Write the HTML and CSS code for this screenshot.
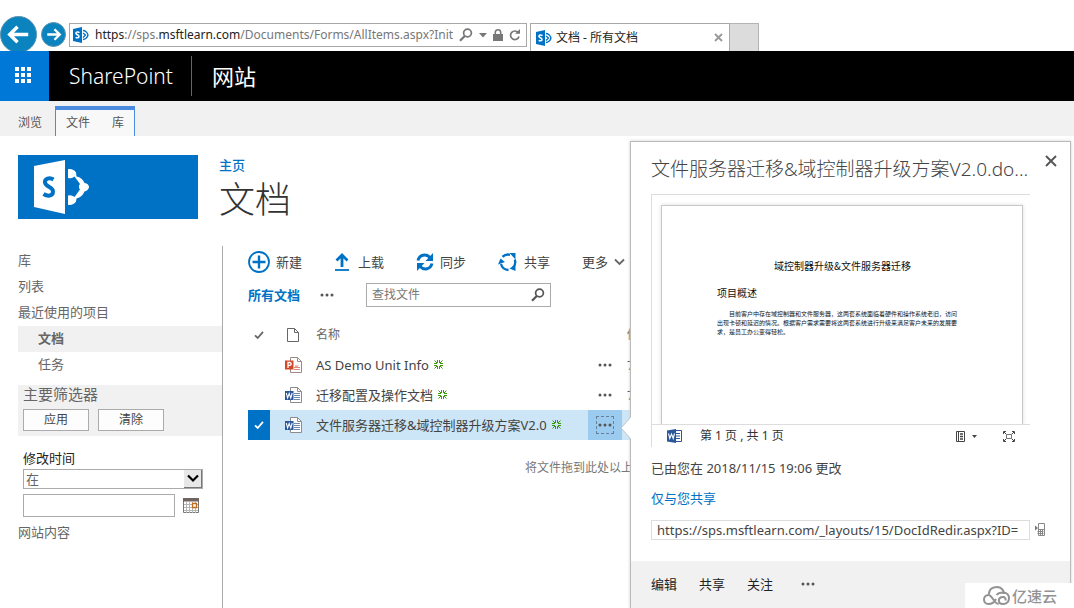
FILE: index.html
```html
<!DOCTYPE html>
<html lang="zh-CN">
<head>
<meta charset="utf-8">
<title>文档 - 所有文档</title>
<link rel="stylesheet" href="styles.css">
</head>
<body>
<svg class="sprite" aria-hidden="true">
  <symbol id="sp" viewBox="0 0 16 16">
    <path d="M0 2 9 0v16L0 14z" fill="#0072c6"/>
    <path d="M6.500 5.600C5 4.600 2.800 4.800 2.900 6.400 3 8 6 7.600 6 9.500 6 11.200 3.800 11.100 2.700 10.300" fill="none" stroke="#fff" stroke-width="1.500"/>
    <path d="M10 3.500c2 0 4.500 2 5 4.500-.5 2.500-3 4.500-5 4.500M10 6l2.500 2L10 10.500" fill="none" stroke="#0072c6" stroke-width="1.300"/>
  </symbol>
  <symbol id="search" viewBox="0 0 14 14">
    <circle cx="8.500" cy="5" r="3.900" fill="none" stroke="currentColor" stroke-width="1.700"/>
    <path d="M5.800 8 1 12.800" stroke="currentColor" stroke-width="2.200"/>
  </symbol>
  <symbol id="dots" viewBox="0 0 14 4">
    <circle cx="2" cy="2" r="1.500"/><circle cx="7" cy="2" r="1.500"/><circle cx="12" cy="2" r="1.500"/>
  </symbol>
  <symbol id="check" viewBox="0 0 10 10">
    <path d="M1 5.300 3.700 8 9 1.800" fill="none" stroke="currentColor" stroke-width="1.800"/>
  </symbol>
  <symbol id="spark" viewBox="0 0 9 9">
    <path d="M.5.500 3 3M8.500.5 6 3M.5 8.500 3 6M8.500 8.500 6 6M3.500 0v3M5.500 0v3M3.500 6v3M5.500 6v3M0 3.500h3M0 5.500h3M6 3.500h3M6 5.500h3" fill="none" stroke="#3c960c" stroke-width="1"/>
  </symbol>
  <symbol id="word" viewBox="0 0 17 16">
    <path d="M5.500.5h7l4 4v11h-11z" fill="#fff" stroke="#8c8c8c"/>
    <path d="M12.500.5v4h4" fill="none" stroke="#8c8c8c"/>
    <path d="M9 6.500h6M9 8.500h6M9 10.500h6M9 12.500h6" stroke="#7186ad"/>
    <path d="M0 4h8.500v9H0z" fill="#2b579a"/>
    <path d="m1.300 6 1.300 5L4.200 6.500 5.800 11 7.200 6" fill="none" stroke="#fff" stroke-width="1.100"/>
  </symbol>
  <symbol id="ppt" viewBox="0 0 17 16">
    <path d="M5.500.5h7l4 4v11h-11z" fill="#fff" stroke="#9a8c88"/>
    <path d="M12.500.5v4h4" fill="none" stroke="#9a8c88"/>
    <path d="M9 10.500h6M9 12.500h6" stroke="#d98a78"/>
    <path d="M10 4.500v4h4a4 4 0 0 1-4 1z" fill="#d98a78"/>
    <path d="M0 3.500h8.500v9H0z" fill="#d24726"/>
    <path d="M3 11V5.500h1.700c2 0 2 2.900 0 2.900H3" fill="none" stroke="#fff" stroke-width="1.300"/>
  </symbol>
</svg>

<header class="browser">
  <div class="nav">
    <button class="nav-btn back" aria-label="后退"><svg viewBox="0 0 36 36"><path d="M28 18H10M17 10l-8 8 8 8" fill="none" stroke="#fff" stroke-width="3.600"/></svg></button>
    <button class="nav-btn forward" aria-label="前进"><svg viewBox="0 0 24 24"><path d="M5.500 12H18M13 6.500l5.500 5.500-5.500 5.500" fill="none" stroke="#fff" stroke-width="2.500"/></svg></button>
  </div>
  <div class="address">
    <svg class="i16"><use href="#sp"/></svg>
    <div class="url"><b>https</b>://sps.<b>msftlearn.com</b>/Documents/Forms/AllItems.aspx?Init</div>
    <button class="plain" aria-label="搜索"><svg class="i14"><use href="#search"/></svg></button>
    <button class="plain" aria-label="展开"><svg width="8" height="5" viewBox="0 0 8 5"><path d="M0 0h8L4 4.500z" fill="#777"/></svg></button>
    <svg class="lock" width="10" height="12" viewBox="0 0 10 12"><path d="M0 5h10v7H0z" fill="#777"/><path d="M2.300 6V3.500a2.700 2.700 0 0 1 5.400 0V6" fill="none" stroke="#777" stroke-width="1.600"/></svg>
    <button class="plain" aria-label="刷新"><svg width="12" height="12" viewBox="0 0 12 12"><path d="M9.500 4A4.300 4.300 0 1 0 10 7.500" fill="none" stroke="#777" stroke-width="1.700"/><path d="M6 4.700h5V0z" fill="#777"/></svg></button>
  </div>
  <div class="tab">
    <svg class="i16"><use href="#sp"/></svg>
    <span>文档 - 所有文档</span>
    <button class="plain" aria-label="关闭标签页"><svg width="9" height="9" viewBox="0 0 9 9"><path d="m1 1 7 7M8 1 1 8" stroke="#999" stroke-width="1.800"/></svg></button>
  </div>
  <button class="new-tab" aria-label="新建标签页"></button>
</header>

<div class="suite">
  <button class="waffle" aria-label="应用启动器"><svg width="16" height="16" viewBox="0 0 16 16"><path d="M0 0h4v4H0zM6 0h4v4H6zM12 0h4v4h-4zM0 6h4v4H0zM6 6h4v4H6zM12 6h4v4h-4zM0 12h4v4H0zM6 12h4v4H6zM12 12h4v4h-4z" fill="#fff"/></svg></button>
  <a class="brand" href="#">SharePoint</a>
  <a class="sites" href="#">网站</a>
</div>

<nav class="ribbon">
  <a href="#">浏览</a>
  <div class="ribbon-group"><a href="#">文件</a><a href="#">库</a></div>
</nav>

<div class="page">
  <div class="heading">
    <a class="logo" href="#" aria-label="SharePoint">
      <svg width="56" height="54" viewBox="0 0 56 54">
        <path d="M0 6 31 0v54L0 47z" fill="#fff"/>
        <path d="M19.500 19.500C15.500 17 10.500 18.500 11 22.500c.5 4.500 8 4 8 9 0 5-5.500 5-9.500 2.500" fill="none" stroke="#0072c6" stroke-width="4"/>
        <path d="M37 14 50 27 37 40" fill="none" stroke="#fff" stroke-width="3"/>
        <path d="M34 9.200c3-.8 6.500.5 8 3.300l.5 4c4 .8 6.500 3 8 6.500 6 1 6 7 0 8.500-1.500 3.500-4 6-8 7l-.5 3c-1.500 2.500-5 4-8 3.200v-9.200c4-.5 6-3 6.500-6h4.500V24H40c-.5-3-3-5-6-6z" fill="#fff"/>
        <path d="M34 18.500c3.500 0 5-1 6.500-2l5.500 7.500c-1.500 1.500-1.500 4 0 5.500l-5.500 7.500c-1.500-1-3-2-6.500-2z" fill="#0072c6"/>
      </svg>
    </a>
    <div class="titles">
      <a class="crumb" href="#">主页</a>
      <h1>文档</h1>
    </div>
  </div>

  <div class="columns">
    <aside class="side">
      <nav>
        <a href="#">库</a>
        <a href="#">列表</a>
        <a href="#">最近使用的项目</a>
        <a class="sub current" href="#">文档</a>
        <a class="sub" href="#">任务</a>
      </nav>
      <section class="filter">
        <h2>主要筛选器</h2>
        <div class="filter-actions"><button>应用</button><button>清除</button></div>
      </section>
      <div class="field">
        <label for="op">修改时间</label>
        <div class="select"><select id="op"><option>在</option></select><svg width="18" height="18" viewBox="0 0 18 18"><path d="M0 0h18v18H0z" fill="#777"/><path d="M0 0h17v17H0z" fill="#e8e8e8"/><path d="m4 5.500 5 5 5-5" fill="none" stroke="#000" stroke-width="2.200"/></svg></div>
        <div class="date">
          <input type="text" aria-label="日期">
          <button class="plain" aria-label="选择日期"><svg width="16" height="16" viewBox="0 0 16 16"><path d="M.5.5h15v14H.5z" fill="#fff" stroke="#777"/><path d="M0 0h16v3.500H0z" fill="#6f6460"/><path d="M3.500 4v11M6.500 4v11M9.500 4v11M12.500 4v11M1 6.500h14M1 9.500h14M1 12.500h14" stroke="#b5b5b5"/><path d="M9.500 5.500h4v4h-4z" fill="#fff" stroke="#c66a1c" stroke-width="1.300"/></svg></button>
        </div>
      </div>
      <nav><a href="#">网站内容</a></nav>
    </aside>

    <main class="main">
      <div class="toolbar">
        <button><svg width="22" height="22" viewBox="0 0 22 22"><circle cx="11" cy="11" r="10" fill="none" stroke="#0072c6" stroke-width="1.800"/><path d="M11 4.500v13M4.500 11h13" stroke="#0072c6" stroke-width="2.400"/></svg>新建</button>
        <button><svg width="18" height="18" viewBox="-1 0 18 18"><path d="M7 14V2M1.500 7.500 7 2l5.500 5.500" fill="none" stroke="#0072c6" stroke-width="2.800"/><path d="M0 17h14" stroke="#0072c6" stroke-width="1.800"/></svg>上载</button>
        <button><svg width="18" height="18" viewBox="0 0 18 18"><path d="M2 7.500C3.500 1.500 10 .5 14 4.500M16 10.500c-1.500 6-8 7-12 3" fill="none" stroke="#0072c6" stroke-width="3"/><path d="M17 0v8H9.500zM1 18v-8h7.500z" fill="#0072c6"/></svg>同步</button>
        <button><svg width="20" height="19" viewBox="0 0 20 19"><path d="M4.500 3.800A8 8 0 0 1 12 1.800M16.800 6.500a8 8 0 0 1-1.800 8M10.500 17A8 8 0 0 1 3 11" fill="none" stroke="#0072c6" stroke-width="2.300"/><path d="M11.500 0h6v6.500zM17.500 11.500V18l-6-2.500zM0 11.500 2.500 5.500 7 9z" fill="#0072c6"/></svg>共享</button>
        <button>更多<svg width="11" height="8" viewBox="0 0 11 8"><path d="m1 1.500 4.500 4.500L10 1.500" fill="none" stroke="#666" stroke-width="1.800"/></svg></button>
      </div>
      <div class="views">
        <a href="#">所有文档</a>
        <button class="plain" aria-label="更多视图"><svg class="dots"><use href="#dots"/></svg></button>
        <div class="search"><input type="text" aria-label="查找文件" placeholder="查找文件"><button class="plain" aria-label="搜索"><svg class="i14"><use href="#search"/></svg></button></div>
      </div>
      <table class="files">
        <thead>
          <tr><th class="c-check"><svg class="i10"><use href="#check"/></svg></th><th class="c-icon"><svg width="12" height="14" viewBox="0 0 12 14"><path d="M.5.500h7l4 4v9H.5zM7.500.5v4h4" fill="none" stroke="#666"/></svg></th><th class="c-name">名称</th><th class="c-menu"></th><th class="c-date">修改时间</th></tr>
        </thead>
        <tbody>
          <tr><td></td><td class="c-icon"><svg class="doc"><use href="#ppt"/></svg></td><td class="c-name"><a href="#">AS Demo Unit Info</a><svg class="spark"><use href="#spark"/></svg></td><td class="c-menu"><button class="plain" aria-label="菜单"><svg class="dots"><use href="#dots"/></svg></button></td><td class="c-date">7 天前</td></tr>
          <tr><td></td><td class="c-icon"><svg class="doc"><use href="#word"/></svg></td><td class="c-name"><a href="#">迁移配置及操作文档</a><svg class="spark"><use href="#spark"/></svg></td><td class="c-menu"><button class="plain" aria-label="菜单"><svg class="dots"><use href="#dots"/></svg></button></td><td class="c-date">7 天前</td></tr>
          <tr class="selected"><td class="c-check"><svg class="i10"><use href="#check"/></svg></td><td class="c-icon"><svg class="doc"><use href="#word"/></svg></td><td class="c-name"><a href="#">文件服务器迁移&amp;域控制器升级方案V2.0</a><svg class="spark"><use href="#spark"/></svg></td><td class="c-menu"><button class="plain" aria-label="菜单"><svg class="dots"><use href="#dots"/></svg></button></td><td class="c-date"></td></tr>
        </tbody>
      </table>
      <p class="drop">将文件拖到此处以上载</p>
    </main>
  </div>
</div>

<div class="callout" role="dialog" aria-label="文件预览">
  <svg class="beak" width="11" height="22" viewBox="0 0 11 22"><path d="M11 0 1 11l10 11z" fill="#fff"/><path d="M10.500.5 1 11l9.500 10.500" fill="none" stroke="#c4c4c4"/></svg>
  <div class="callout-body">
    <div class="callout-head">
      <h2>文件服务器迁移&amp;域控制器升级方案V2.0.do...</h2>
      <button class="plain" aria-label="关闭"><svg width="12" height="12" viewBox="0 0 12 12"><path d="m1 1 10 10M11 1 1 11" stroke="#555" stroke-width="1.900"/></svg></button>
    </div>
    <div class="preview">
      <div class="sheet-area">
        <article class="sheet">
          <h3>域控制器升级&amp;文件服务器迁移</h3>
          <h4>项目概述</h4>
          <p>目前客户中存在域控制器和文件服务器，这两套系统面临着硬件和操作系统老旧，访问出现卡顿和延迟的情况。根据客户需求需要将这两套系统进行升级来满足客户未来的发展要求，是员工办公变得轻松。</p>
        </article>
      </div>
      <div class="status">
        <svg width="15" height="14" viewBox="0 0 15 14"><path d="M8 1.500h6.500v11H8z" fill="#fff" stroke="#2b579a"/><path d="M9 4.500h4M9 7h4M9 9.500h4" stroke="#2b579a" stroke-width="1.200"/><path d="M0 1.500 9 0v14l-9-1.500z" fill="#2b579a"/><path d="M1.500 4.500 2.800 9.500 4.500 5 6.200 9.500 7.500 4.500" fill="none" stroke="#fff" stroke-width="1.100"/></svg>
        <span>第 1 页 , 共 1 页</span>
        <button class="plain view-mode" aria-label="视图"><svg width="21" height="11" viewBox="0 0 21 11"><path d="M.5.500h8v10h-8zM2.500.5v10" fill="none" stroke="#444"/><path d="M4 3h3M4 5.500h3M4 8h3" stroke="#444" stroke-width="1.300"/><path d="M16 4h5l-2.500 3z" fill="#444"/></svg></button>
        <button class="plain" aria-label="全屏"><svg width="12" height="11" viewBox="0 0 12 11"><path d="M.5 3V.5H3M9 .5h2.500V3M11.500 8v2.500H9M3 10.500H.5V8M1 1l2.500 2.500M11 1 8.500 3.500M11 10 8.500 7.500M1 10l2.500-2.500" fill="none" stroke="#444"/><path d="M3.500 3.500h5v4h-5z" fill="none" stroke="#777"/></svg></button>
      </div>
    </div>
    <p class="changed">已由您在 2018/11/15 19:06 更改</p>
    <a class="shared" href="#">仅与您共享</a>
    <div class="link-row">
      <input type="text" aria-label="文档链接" readonly value="https://sps.msftlearn.com/_layouts/15/DocIdRedir.aspx?ID=">
      <button class="plain" aria-label="在手机上打开"><svg width="10" height="14" viewBox="0 0 10 14"><path d="M3.500.5h6v12h-6zM4 6.500h5" fill="none" stroke="#888"/><path d="M0 2.500 3 5 0 7.500z" fill="#777"/><path d="M2.500 8.500h6M2.500 10.500h6M5.500 7v5M7.500 7v5" stroke="#888"/></svg></button>
    </div>
  </div>
  <footer class="callout-foot">
    <button>编辑</button><button>共享</button><button>关注</button><button aria-label="更多"><svg class="dots"><use href="#dots"/></svg></button>
  </footer>
</div>

<div class="watermark">
  <svg width="27" height="19" viewBox="0 0 27 19"><path d="M6 8C6 3 10 1 14 1s7 3 7 7M13 13c-2 4-5 5-7.500 5-6 0-6-9 0-9 4 0 5.500 9 10 9M13.500 9c1.500-2 4-2.500 6.500-2.500 8 0 8 11.500 0 11.500-5.500 0-5.500-7 0-7 2 0 3 1.500 2.500 3.500" fill="none" stroke="#929294" stroke-width="2"/></svg>
  <span>亿速云</span>
</div>
</body>
</html>
```
FILE: styles.css
```css
* { box-sizing: border-box; }
body {
  margin: 0;
  min-height: 100vh;
  position: relative;
  overflow: hidden;
  background: #fff;
  color: #444;
  font: 13px/20px "Noto Sans", "Noto Sans CJK SC", sans-serif;
}
a { color: inherit; text-decoration: none; }
h1, h2, h3, h4, p { margin: 0; font-weight: 400; }
button, input, select { font: inherit; color: inherit; border-radius: 0; }
button { padding: 0; border: 0; background: none; }
svg { display: block; flex: none; }
.sprite { position: absolute; width: 0; height: 0; }
.plain { display: flex; align-items: center; justify-content: center; }
.i10 { width: 10px; height: 10px; }
.i14 { width: 14px; height: 14px; }
.i16 { width: 16px; height: 16px; }
.dots { width: 14px; height: 4px; fill: #555; }

/* browser chrome */
.browser { display: flex; align-items: flex-start; height: 51px; padding-top: 16px; overflow: hidden; }
.nav { display: flex; align-items: center; gap: 4px; width: 69px; height: 37px; flex: none; }
.nav-btn { flex: none; border: 1px solid #5d94ad; border-radius: 50%; background: #0a83bf; overflow: hidden; }
.back { width: 37px; height: 37px; }
.forward { width: 25px; height: 25px; }
.nav-btn svg { width: 100%; height: 100%; }
.address {
  display: flex; align-items: center; gap: 6px;
  width: 458px; height: 24px; margin-top: 7px; padding: 0 5px 0 3px;
  border: 1px solid #a8a8a8; color: #777; flex: none;
}
.url { flex: 1; white-space: nowrap; color: #777; font-size: 12px; }
.url b { font-weight: 400; color: #222; }
.tab {
  display: flex; align-items: center; gap: 4px;
  width: 200px; height: 28px; margin: 7px 0 0 3px; padding: 0 6px 0 5px;
  border: 1px solid #a8a8a8; border-bottom: 0; color: #222; font-size: 12px; flex: none;
}
.tab button { margin-left: auto; }
.new-tab { width: 29px; height: 28px; margin-top: 7px; border: 1px solid #b4b4b4; border-width: 1px 1px 0 0; background: #dcdcdc; }

/* suite bar */
.suite { display: flex; align-items: center; height: 50px; background: #000; color: #fff; font-size: 21px; line-height: 40px; }
.waffle { display: flex; align-items: center; justify-content: center; width: 49px; height: 50px; padding: 0 3px 2px 0; background: #0078d7; }
.brand { padding: 0 18px 0 20px; border-right: 1px solid #666; font-weight: 300; }
.sites { padding-left: 20px; font-size: 22px; }

/* ribbon */
.ribbon { display: flex; align-items: flex-start; gap: 13px; height: 35px; padding: 5px 0 0 18px; background: #f1f1f1; color: #555; font-size: 12px; line-height: 24px; white-space: nowrap; }
.ribbon > a { padding-top: 5px; }
.ribbon-group { display: flex; gap: 22px; width: 80px; height: 30px; padding: 1px 0 0 10px; border: 1px solid #4a8be0; border-top-width: 4px; border-bottom: 0; background: #f8f8f8; }

/* page */
.page { padding: 19px 0 0 18px; }
.heading { display: flex; gap: 21px; height: 91px; }
.logo { width: 180px; height: 64px; padding: 5px 16px; background: #0072c6; }
.crumb { display: block; color: #0072c6; font-weight: 500; }
h1 { color: #333; font-size: 36px; font-weight: 300; line-height: 50px; }
.columns { display: flex; min-height: 362px; }
.side { width: 205px; flex: none; padding-top: 2px; border-right: 1px solid #aaa; color: #666; }
.side nav a { display: block; padding: 2px 0; line-height: 20px; height: 26px; }
.side .sub { padding-left: 20px; }
.side .current { background: #f1f1f1; font-weight: 700; }
.filter { margin-top: 7px; padding: 0 5px 4px; background: #f1f1f1; height: 51px; }
.filter h2 { font-size: 15px; line-height: 18px; height: 24px; }
.filter-actions { display: flex; gap: 9px; }
.filter-actions button { width: 66px; height: 22px; border: 1px solid #ababab; background: #fdfdfd; font-size: 12px; line-height: 18px; color: #444; }
.field { padding: 12px 5px 0; }
.field label { display: block; padding-bottom: 1px; color: #222; }
.select { display: flex; width: 180px; height: 20px; border: 1px solid #ababab; }
.select select { flex: 1; padding: 0 2px; border: 0; background: #fff; appearance: none; line-height: 18px; }
.date { display: flex; gap: 8px; margin: 5px 0 3px; }
.date input { width: 152px; height: 23px; border: 1px solid #ababab; }

.main { flex: 1; padding: 5px 20px 0 25px; min-width: 0; }
.toolbar { display: flex; align-items: center; gap: 32px; height: 22px; }
.toolbar button { display: flex; align-items: center; gap: 6px; }
.views { display: flex; align-items: center; height: 24px; margin-top: 10px; }
.views a { width: 72px; color: #0072c6; font-weight: 700; }
.search { display: flex; align-items: center; width: 185px; height: 24px; margin-left: 32px; padding: 0 5px; border: 1px solid #ababab; color: #555; }
.search input { flex: 1; min-width: 0; padding: 0; border: 0; font-size: 12px; }
.search input::placeholder { color: #777; opacity: 1; }
.files { margin-top: 12px; border-collapse: collapse; table-layout: fixed; width: 100%; }
.files th, .files td { padding: 0; height: 30px; text-align: left; font-weight: 400; vertical-align: middle; }
.files th { height: 31px; color: #666; font-size: 12px; }
.files .c-check { width: 22px; }
.files .c-check svg { margin: 0 auto; }
.files th.c-icon { width: 46px; }
.c-icon svg { margin: 0 auto; }
.doc { width: 17px; height: 16px; }
.files th.c-name { width: 272px; }
.files td.c-name { padding-bottom: 2px; }
.files td.c-name a { display: inline-block; vertical-align: middle; }
.spark { display: inline-block; width: 9px; height: 9px; margin-left: 5px; vertical-align: middle; }
.files .c-menu { width: 34px; }
.c-menu button { width: 34px; height: 30px; }
.files .c-date { padding-left: 5px; }
.selected { background: #cde6f7; }
.selected .c-check { background: #0072c6; color: #fff; }
.selected .c-menu { background: #9bcbef; }
.selected .dots { width: 16px; height: 16px; padding: 6px 1px; outline: 1px dashed #66809a; }
.drop { padding-top: 18px; padding-left: 277px; color: #777; font-size: 12px; }

/* callout */
.callout {
  position: absolute; top: 141px; right: 3px; bottom: 0; width: 441px;
  display: flex; flex-direction: column;
  border: 1px solid #bbb; border-bottom: 0; background: #fff;
  box-shadow: 0 0 3px #ccc;
}
.beak { position: absolute; left: -11px; top: 275px; }
.callout-body { flex: 1; padding: 12px 20px 0; }
.callout-head { display: flex; align-items: flex-start; justify-content: space-between; height: 40px; }
.callout-head h2 { white-space: nowrap; font-size: 19px; font-weight: 300; line-height: 30px; color: #444; }
.callout-head button { width: 20px; height: 14px; margin-right: -11px; }
.preview { width: 379px; border: 1px solid #ddd; border-width: 1px 0 0 1px; }
.sheet-area { height: 230px; padding: 10px 7px 0 9px; border-bottom: 1px solid #ddd; overflow: hidden; }
.sheet { height: 100%; padding: 52px 54px 0 55px; border: 1px solid #c8c8c8; border-bottom: 0; box-shadow: 0 0 4px #ddd; color: #111; font-family: "Noto Sans CJK SC", sans-serif; }
.sheet h3 { font-size: 10px; line-height: 16px; text-align: center; }
.sheet h4 { margin-top: 11px; font-size: 10px; line-height: 16px; }
.sheet p { max-width: 40em; margin-top: 8px; font-size: 6px; line-height: 9px; text-indent: 2em; }
.status { display: flex; align-items: center; height: 22px; padding: 0 15px; color: #333; font-size: 12px; }
.status span { margin-left: 18px; }
.view-mode { margin: 0 26px 0 auto; }
.changed { margin-top: 11px; }
.shared { display: block; margin-top: 10px; color: #0072c6; }
.link-row { display: flex; gap: 5px; margin-top: 12px; }
.link-row input { width: 379px; height: 20px; padding: 0 5px; border: 1px solid #ddd; }
.callout-foot { display: flex; gap: 22px; height: 47px; padding: 0 20px 2px; background: #f1f1f1; color: #222; }
.callout-foot button { min-width: 26px; }
.callout-foot button:last-child { margin-left: 6px; }

.watermark { position: absolute; right: 0; bottom: 0; display: flex; align-items: center; gap: 2px; width: 109px; height: 25px; padding-left: 18px; background: #fff; color: #929294; font-size: 15px; font-weight: 500; }
```
